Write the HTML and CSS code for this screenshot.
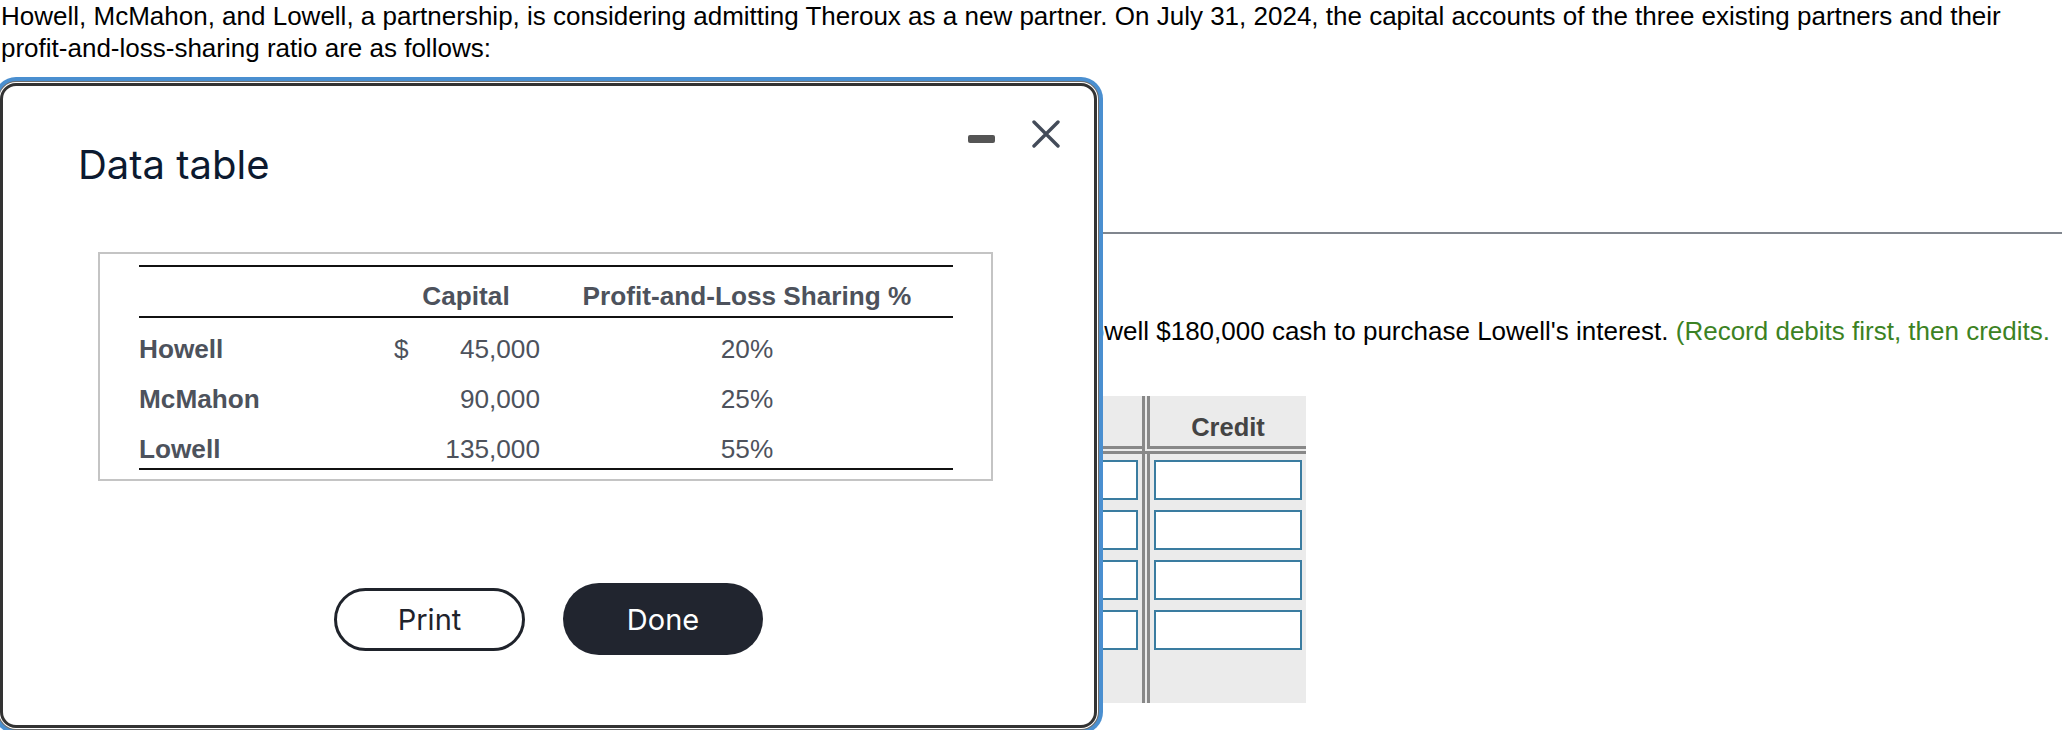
FILE: index.html
```html
<!DOCTYPE html>
<html lang="en">
<head>
  <meta charset="UTF-8" />
  <title>Partnership - Data table</title>
  <link rel="stylesheet" href="styles.css">
</head>
<body>

<div class="page">
  <p class="intro">Howell, McMahon, and Lowell, a partnership, is considering admitting Theroux as a new partner. On July 31, 2024, the capital accounts of the three existing partners and their <span class="nobr">profit-and-loss-sharing</span> ratio are as follows:</p>

  <hr class="rule">

  <p class="req">Theroux pays Lowell $180,000 cash to purchase Lowell's interest. <span class="hint">(Record debits first, then credits.</span></p>

  <div class="journal">
    <div class="jrow jhead">
      <div class="jcell acct"></div>
      <div class="jcell">Debit</div>
      <div class="jcell credit">Credit</div>
    </div>
    <div class="jrow">
      <div class="jcell acct"><input type="text"></div>
      <div class="jcell"><input type="text"></div>
      <div class="jcell credit"><input type="text"></div>
    </div>
    <div class="jrow">
      <div class="jcell acct"><input type="text"></div>
      <div class="jcell"><input type="text"></div>
      <div class="jcell credit"><input type="text"></div>
    </div>
    <div class="jrow">
      <div class="jcell acct"><input type="text"></div>
      <div class="jcell"><input type="text"></div>
      <div class="jcell credit"><input type="text"></div>
    </div>
    <div class="jrow">
      <div class="jcell acct"><input type="text"></div>
      <div class="jcell"><input type="text"></div>
      <div class="jcell credit"><input type="text"></div>
    </div>
    <div class="jrow jfoot">
      <div class="jcell acct"></div>
      <div class="jcell"></div>
      <div class="jcell credit"></div>
    </div>
  </div>
</div>

<!-- popup data table -->
<div class="modal">
  <div class="win-controls">
    <svg class="ic-min" width="27" height="8" viewBox="0 0 27 8"><rect x="0" y="0" width="27" height="8" rx="2" fill="#555"/></svg>
    <svg class="ic-close" width="28" height="28" viewBox="0 0 28 28"><path d="M2 2 L26 26 M26 2 L2 26" stroke="#434b59" stroke-width="3.4" stroke-linecap="round"/></svg>
  </div>

  <h2 class="modal-title">Data table</h2>

  <div class="data-box">
    <table class="data">
      <thead>
        <tr>
          <th class="c-name"></th>
          <th colspan="2">Capital</th>
          <th class="c-pct">Profit-and-Loss Sharing %</th>
        </tr>
      </thead>
      <tbody>
        <tr>
          <td class="c-name">Howell</td>
          <td class="c-sym">$</td>
          <td class="c-amt">45,000</td>
          <td class="c-pct">20%</td>
        </tr>
        <tr>
          <td class="c-name">McMahon</td>
          <td class="c-sym"></td>
          <td class="c-amt">90,000</td>
          <td class="c-pct">25%</td>
        </tr>
        <tr>
          <td class="c-name">Lowell</td>
          <td class="c-sym"></td>
          <td class="c-amt">135,000</td>
          <td class="c-pct">55%</td>
        </tr>
      </tbody>
    </table>
  </div>

  <div class="modal-actions">
    <button class="btn-print">Print</button>
    <button class="btn-done">Done</button>
  </div>
</div>

</body>
</html>
```

FILE: styles.css
```css
* { box-sizing: border-box; }
body {
  margin: 0;
  font-family: 'Liberation Sans', Arial, sans-serif;
  background: #fff;
  color: #000;
  overflow: hidden;
}
.page {
  width: 2062px;
  height: 730px;
}
.intro {
  margin: 0;
  padding-left: 1px;
  font-size: 26px;
  line-height: 32px;
}
.nobr {
  white-space: nowrap;
}
.rule {
  margin: 168px 0 0;
  border: none;
  height: 2px;
  background: #80868e;
}
.req {
  margin: 81px 0 0;
  padding-right: 12px;
  font-size: 26px;
  line-height: 32px;
  text-align: right;
  white-space: nowrap;
}
.hint {
  color: #3c8223;
}
.journal {
  margin: 49px 0 0 560px;
  width: 746px;
  background: #ebebeb;
}
.jrow {
  display: grid;
  grid-template-columns: 426px 156px 164px;
}
.jcell {
  padding: 6px 4px 4px;
  height: 50px;
}
.jcell.credit {
  border-left: 8px double #888;
}
.jhead .jcell {
  height: 58px;
  padding: 16px 4px 0;
  border-bottom: 8px double #888;
  text-align: center;
  font-weight: bold;
  font-size: 25.5px;
  line-height: 30px;
  color: #444;
}
.jfoot .jcell {
  height: 49px;
}
.jcell input {
  display: block;
  width: 100%;
  height: 40px;
  margin: 0;
  border: 2px solid #3a7ca0;
  background: #fff;
}

/* modal */
.modal {
  position: absolute;
  top: 83px;
  left: 0;
  width: 1097px;
  height: 645px;
  background: #fff;
  border: 3px solid #333;
  border-radius: 16px;
  box-shadow: 0 0 0 1px #fff, 0 0 0 2px #6d6d6d, 0 0 0 6px #4a8fd0;
  padding: 55px 0 0 78px;
}
.win-controls {
  position: absolute;
  top: 34px;
  right: 34px;
  display: flex;
  align-items: flex-start;
  gap: 37px;
}
.ic-min {
  margin-top: 15px;
}
.modal-title {
  margin: 0 0 0 -3px;
  font-family: 'Inter', sans-serif;
  font-weight: 400;
  font-size: 40px;
  line-height: 48px;
  color: #0c1a30;
}
.data-box {
  margin: 63px 0 0 17px;
  width: 895px;
  height: 229px;
  border: 2px solid #c4c4c4;
  padding: 11px 38px 0 39px;
}
.data {
  width: 814px;
  border-collapse: collapse;
  font-size: 26.2px;
  line-height: 30px;
  color: #4d525c;
}
.data thead tr {
  border-top: 2px solid #111;
  border-bottom: 2px solid #111;
}
.data tbody tr:last-child {
  border-bottom: 2px solid #111;
}
.data th {
  padding: 14px 0 5px;
  font-weight: bold;
  text-align: center;
}
.data td {
  padding: 16px 0 4px;
  vertical-align: bottom;
}
.c-name {
  width: 245px;
  text-align: left;
  font-weight: bold;
}
.c-sym {
  width: 36px;
  padding-left: 10px !important;
}
.c-amt {
  width: 128px;
  text-align: right;
  padding-right: 8px !important;
}
.c-pct {
  text-align: center;
  padding-right: 7px !important;
}
.modal-actions {
  display: flex;
  justify-content: center;
  align-items: center;
  gap: 38px;
  margin: 102px 0 0 -78px;
}
.modal-actions button {
  font-family: 'Inter', sans-serif;
  font-size: 29px;
  cursor: pointer;
}
.btn-print {
  width: 191px;
  height: 63px;
  border: 3px solid #1f232b;
  border-radius: 32px;
  background: #fff;
  color: #1f232b;
}
.btn-done {
  width: 200px;
  height: 72px;
  border: none;
  border-radius: 36px;
  background: #21252f;
  color: #fff;
}
```
